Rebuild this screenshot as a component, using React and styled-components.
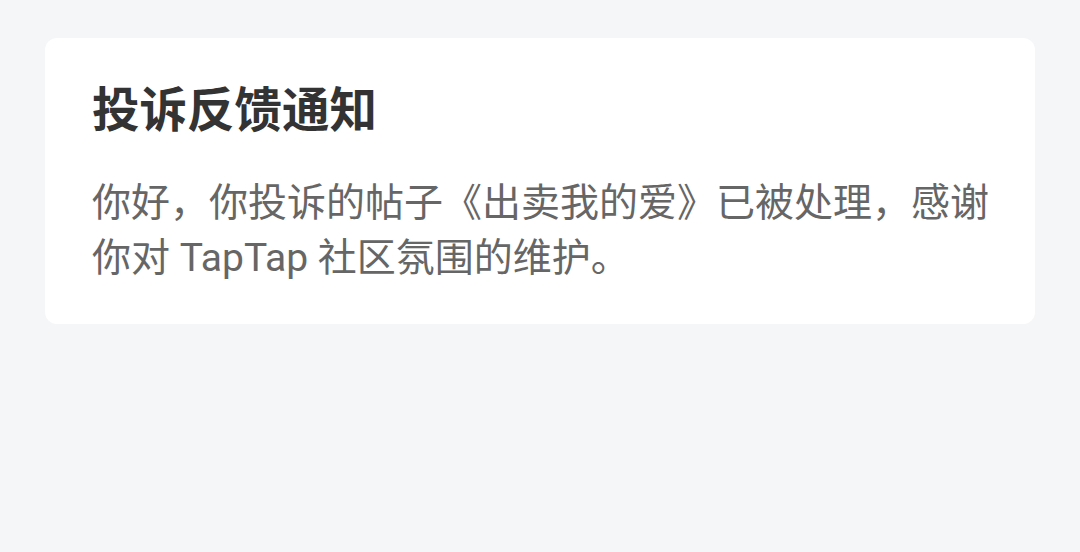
import React from "react";
import styled, { createGlobalStyle } from "styled-components";

const Global = createGlobalStyle`
  html, body { margin: 0; padding: 0; background: #f5f6f8; }
  body { font-family: Roboto, "Noto Sans CJK SC", sans-serif; }
`;

const Page = styled.div`
  min-height: 552px;
  padding: 38px 45px;
  box-sizing: border-box;
`;

const Card = styled.div`
  background: #ffffff;
  border-radius: 12px;
  padding: 41px 42px 38px 47px;
`;

const Title = styled.h1`
  margin: 0 0 33px;
  font-size: 47.5px;
  line-height: 64px;
  font-weight: 700;
  color: #333333;
`;

const Body = styled.p`
  margin: 0;
  font-size: 39px;
  line-height: 55px;
  color: #666666;
`;

export default function App() {
  return (
    <>
      <Global />
      <Page>
        <Card>
          <Title>投诉反馈通知</Title>
          <Body>你好，你投诉的帖子《出卖我的爱》已被处理，感谢你对 TapTap 社区氛围的维护。</Body>
        </Card>
      </Page>
    </>
  );
}
